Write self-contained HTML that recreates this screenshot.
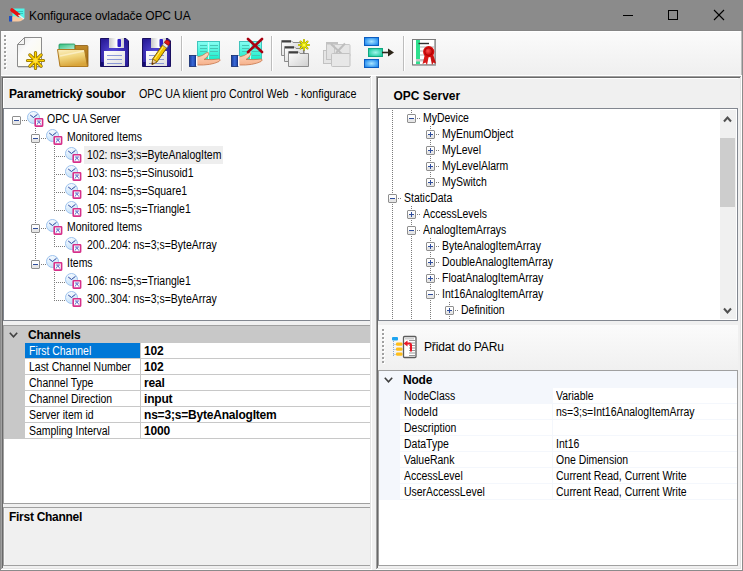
<!DOCTYPE html><html><head><meta charset="utf-8"><style>
html,body{margin:0;padding:0}
body{width:743px;height:571px;overflow:hidden;position:relative;background:#f0f0f0;font-family:"Liberation Sans",sans-serif}
body>div,body>svg{position:absolute}
.t{transform-origin:0 0}
.t{white-space:pre}
</style></head><body>
<div style="left:0px;top:0px;width:743px;height:31px;background:#8b8b8b"></div>
<div style="left:0px;top:30px;width:743px;height:1px;background:#858585"></div>
<div style="left:0px;top:31px;width:1px;height:540px;background:#8b8b8b"></div>
<div style="left:742px;top:31px;width:1px;height:540px;background:#8b8b8b"></div>
<div style="left:0px;top:570px;width:743px;height:1px;background:#8b8b8b"></div>
<div class="t" style="left:29px;top:8px;font-size:12px;line-height:16px;font-weight:normal;color:#000;letter-spacing:-0.12px;">Konfigurace ovladače OPC UA</div>
<svg style="left:0;top:0" width="743" height="31"><g stroke="#000" stroke-width="1" fill="none" shape-rendering="crispEdges"><line x1="623" y1="15.5" x2="633" y2="15.5"/><rect x="668.5" y="10.5" width="9" height="9"/></g><g stroke="#000" stroke-width="1.1" fill="none"><line x1="714" y1="10" x2="724" y2="20"/><line x1="724" y1="10" x2="714" y2="20"/></g></svg>
<div style="left:1px;top:31px;width:741px;height:44px;background:linear-gradient(#fbfbfb,#efefef)"></div>
<div style="left:1px;top:31px;width:741px;height:1px;background:#ffffff"></div>
<div style="left:1px;top:75px;width:741px;height:1px;background:#ffffff"></div>
<div style="left:741px;top:31px;width:1px;height:44px;background:#bcbcbc"></div>
<div style="left:5px;top:36px;width:2px;height:2px;background:#fff"></div>
<div style="left:4px;top:35px;width:2px;height:2px;background:#a0a0a0"></div>
<div style="left:5px;top:40px;width:2px;height:2px;background:#fff"></div>
<div style="left:4px;top:39px;width:2px;height:2px;background:#a0a0a0"></div>
<div style="left:5px;top:44px;width:2px;height:2px;background:#fff"></div>
<div style="left:4px;top:43px;width:2px;height:2px;background:#a0a0a0"></div>
<div style="left:5px;top:48px;width:2px;height:2px;background:#fff"></div>
<div style="left:4px;top:47px;width:2px;height:2px;background:#a0a0a0"></div>
<div style="left:5px;top:52px;width:2px;height:2px;background:#fff"></div>
<div style="left:4px;top:51px;width:2px;height:2px;background:#a0a0a0"></div>
<div style="left:5px;top:56px;width:2px;height:2px;background:#fff"></div>
<div style="left:4px;top:55px;width:2px;height:2px;background:#a0a0a0"></div>
<div style="left:5px;top:60px;width:2px;height:2px;background:#fff"></div>
<div style="left:4px;top:59px;width:2px;height:2px;background:#a0a0a0"></div>
<div style="left:5px;top:64px;width:2px;height:2px;background:#fff"></div>
<div style="left:4px;top:63px;width:2px;height:2px;background:#a0a0a0"></div>
<div style="left:5px;top:68px;width:2px;height:2px;background:#fff"></div>
<div style="left:4px;top:67px;width:2px;height:2px;background:#a0a0a0"></div>
<div style="left:181px;top:36px;width:1px;height:35px;background:#bdbdbd"></div>
<div style="left:182px;top:36px;width:1px;height:35px;background:#ffffff"></div>
<div style="left:271px;top:36px;width:1px;height:35px;background:#bdbdbd"></div>
<div style="left:272px;top:36px;width:1px;height:35px;background:#ffffff"></div>
<div style="left:403px;top:36px;width:1px;height:35px;background:#bdbdbd"></div>
<div style="left:404px;top:36px;width:1px;height:35px;background:#ffffff"></div>
<svg style="left:0;top:0" width="743" height="80">
<defs>
<linearGradient id="paperg" x1="0" y1="0" x2="1" y2="1"><stop offset="0" stop-color="#e4e4e4"/><stop offset="0.35" stop-color="#fbfbfb"/><stop offset="1" stop-color="#fdfbe6"/></linearGradient>
<linearGradient id="foldfront" x1="0" y1="0" x2="0.3" y2="1"><stop offset="0" stop-color="#fbefc4"/><stop offset="0.5" stop-color="#f1d67e"/><stop offset="1" stop-color="#d9a53a"/></linearGradient>
<linearGradient id="foldback" x1="0" y1="0" x2="0" y2="1"><stop offset="0" stop-color="#c08a2a"/><stop offset="1" stop-color="#9a6410"/></linearGradient>
<linearGradient id="tabg" x1="0" y1="0" x2="1" y2="1"><stop offset="0" stop-color="#2dbf7c"/><stop offset="1" stop-color="#b8ecd8"/></linearGradient>
<radialGradient id="flop" cx="0.45" cy="0.55" r="0.6"><stop offset="0" stop-color="#5b4fe0"/><stop offset="1" stop-color="#2a1d9a"/></radialGradient>
<linearGradient id="shut" x1="0" y1="0" x2="1" y2="0"><stop offset="0" stop-color="#c8c8c8"/><stop offset="0.5" stop-color="#ffffff"/><stop offset="1" stop-color="#d0d0d0"/></linearGradient>
<linearGradient id="labelg" x1="0" y1="0" x2="1" y2="1"><stop offset="0" stop-color="#ffffff"/><stop offset="1" stop-color="#dedede"/></linearGradient>
<linearGradient id="bookg" x1="0" y1="0" x2="0" y2="1"><stop offset="0" stop-color="#88fff4"/><stop offset="1" stop-color="#18ecc8"/></linearGradient>
<linearGradient id="skin" x1="0" y1="0" x2="0" y2="1"><stop offset="0" stop-color="#ffdcc4"/><stop offset="1" stop-color="#f6b08a"/></linearGradient>
<linearGradient id="sleeve" x1="0" y1="0" x2="1" y2="0"><stop offset="0" stop-color="#1a3c9c"/><stop offset="0.5" stop-color="#3a6ad8"/><stop offset="1" stop-color="#1a3c9c"/></linearGradient>
<linearGradient id="gfold" x1="0" y1="0" x2="1" y2="1"><stop offset="0" stop-color="#ffffff"/><stop offset="1" stop-color="#cfcfcf"/></linearGradient>
<radialGradient id="blueb" cx="0.5" cy="0.5" r="0.6"><stop offset="0" stop-color="#a8e4ff"/><stop offset="1" stop-color="#1a86ee"/></radialGradient>
<radialGradient id="tealb" cx="0.5" cy="0.5" r="0.6"><stop offset="0" stop-color="#a0f4ec"/><stop offset="1" stop-color="#18c89a"/></radialGradient>
<radialGradient id="seal" cx="0.4" cy="0.4" r="0.6"><stop offset="0" stop-color="#ff5050"/><stop offset="1" stop-color="#c00000"/></radialGradient>
</defs>

<g><path d="M24.5,37.5 H41.5 V66.5 H17.5 V44.5 Z" fill="url(#paperg)" stroke="#8c8c8c" stroke-width="1" stroke-linejoin="round"/><path d="M17.5,44.5 L24.5,37.5 V44.5 Z" fill="#f4f4f4" stroke="#8c8c8c" stroke-width="1" stroke-linejoin="round"/><rect x="18" y="67" width="24" height="1" fill="#d0d0d0"/></g>
<path d="M27.50,60.50 L43.50,60.50 M29.84,54.84 L41.16,66.16 M35.50,52.50 L35.50,68.50 M41.16,54.84 L29.84,66.16 " stroke="#8a6a00" stroke-width="3.2" stroke-linecap="round" fill="none"/><path d="M27.50,60.50 L43.50,60.50 M29.84,54.84 L41.16,66.16 M35.50,52.50 L35.50,68.50 M41.16,54.84 L29.84,66.16 " stroke="#ffd400" stroke-width="1.6" stroke-linecap="round" fill="none"/><circle cx="35.5" cy="60.5" r="2.2" fill="#ffe040"/>
<path d="M59,49.5 V45 Q59,44 60,44 H74 Q75,44 75,45 V49.5 Z" fill="url(#tabg)" stroke="#1f8f5c" stroke-width="0.8"/><path d="M75,45.5 H87 Q88,45.5 88,46.5 V66.5 H76 Z" fill="url(#foldback)" stroke="#8a5a10" stroke-width="0.8"/><path d="M57.5,49.5 H84.5 L87.5,66.5 H60 Z" fill="url(#foldfront)" stroke="#b07a20" stroke-width="1" stroke-linejoin="round"/><path d="M60,56 L84,51" stroke="#fff8e0" stroke-width="1.5" opacity="0.6"/>
<path d="M100.5,38.5 H126 L128.5,41 V66.5 H100.5 Z" fill="url(#flop)" stroke="#1a1060" stroke-width="1"/><rect x="109" y="38" width="15" height="10" fill="url(#shut)"/><rect x="117.5" y="39" width="3.5" height="8" rx="1" fill="#3020c8"/><rect x="104" y="51" width="21" height="15" fill="url(#labelg)"/><path d="M107,55.5 H122 M107,59.5 H122 M107,63.5 H122" stroke="#8a98d8" stroke-width="1"/><rect x="101" y="62" width="2.5" height="4" fill="#140c70"/>
<path d="M142.5,38.5 H168 L170.5,41 V66.5 H142.5 Z" fill="url(#flop)" stroke="#1a1060" stroke-width="1"/><rect x="151" y="38" width="15" height="10" fill="url(#shut)"/><rect x="159.5" y="39" width="3.5" height="8" rx="1" fill="#3020c8"/><rect x="146" y="51" width="21" height="15" fill="url(#labelg)"/><path d="M149,55.5 H164 M149,59.5 H164 M149,63.5 H164" stroke="#8a98d8" stroke-width="1"/><rect x="143" y="62" width="2.5" height="4" fill="#140c70"/>
<g transform="translate(152,64.5) rotate(-55)"><path d="M0,0 L5,-2.6 H22 V2.6 H5 Z" fill="#f4c400" stroke="#7a5a00" stroke-width="0.9"/><path d="M0,0 L5,-2.6 V2.6 Z" fill="#e8c8a0" stroke="#7a5a00" stroke-width="0.6"/><path d="M0,0 L2,-1 V1 Z" fill="#602000"/><rect x="22" y="-2.6" width="3" height="5.2" fill="#e8e8e8" stroke="#7a7a7a" stroke-width="0.5"/><path d="M25,-2.6 H27 Q29,-2.6 29,0 Q29,2.6 27,2.6 H25 Z" fill="#e01818" stroke="#900000" stroke-width="0.6"/><path d="M6,-1 H21" stroke="#fff080" stroke-width="0.9"/></g>
<rect x="197.5" y="41.5" width="22" height="18" fill="url(#bookg)" stroke="#40c4bc" stroke-width="1"/><path d="M208.5,42 V59" stroke="#c0fff8" stroke-width="1"/><path d="M200,45.5 H207 M200,48.5 H207 M200,51.5 H207 M210,45.5 H218 M210,48.5 H218 M210,51.5 H218 M210,55.5 H218" stroke="#48c4b4" stroke-width="1"/><path d="M197,57 Q203,56 206,53 Q209,51.5 209,54 Q207,58 204,59.5 Q212,60 219,59 Q221.5,59.5 219,61.5 Q211,65.5 197,65 Z" fill="url(#skin)" stroke="#c8784e" stroke-width="0.8"/><rect x="189.5" y="55.5" width="6.5" height="11" fill="url(#sleeve)" stroke="#10286c" stroke-width="0.8"/><rect x="196" y="56" width="1.5" height="10" fill="#ffffff"/>
<rect x="239.5" y="41.5" width="22" height="18" fill="url(#bookg)" stroke="#40c4bc" stroke-width="1"/><path d="M250.5,42 V59" stroke="#c0fff8" stroke-width="1"/><path d="M242,45.5 H249 M242,48.5 H249 M242,51.5 H249 M252,45.5 H260 M252,48.5 H260 M252,51.5 H260 M252,55.5 H260" stroke="#48c4b4" stroke-width="1"/><path d="M239,57 Q245,56 248,53 Q251,51.5 251,54 Q249,58 246,59.5 Q254,60 261,59 Q263.5,59.5 261,61.5 Q253,65.5 239,65 Z" fill="url(#skin)" stroke="#c8784e" stroke-width="0.8"/><rect x="231.5" y="55.5" width="6.5" height="11" fill="url(#sleeve)" stroke="#10286c" stroke-width="0.8"/><rect x="238" y="56" width="1.5" height="10" fill="#ffffff"/>
<path d="M248,39 L262,52 M262,39 L248,52" stroke="#a80010" stroke-width="2.6" stroke-linecap="round"/>
<path d="M281.5,40.5 H291 L293,42.5 V42.5 H300.5 V55.5 H281.5 Z" fill="url(#gfold)" stroke="#8c8c8c" stroke-width="1"/><rect x="282" y="40.5" width="9" height="2" fill="#404040"/>
<path d="M284.5,46.5 H294 L296,48.5 V48.5 H303.5 V61.5 H284.5 Z" fill="url(#gfold)" stroke="#8c8c8c" stroke-width="1"/><rect x="285" y="46.5" width="9" height="2" fill="#404040"/>
<path d="M288.5,51.5 H298 L300,53.5 V53.5 H308.5 V66.5 H288.5 Z" fill="url(#gfold)" stroke="#8c8c8c" stroke-width="1"/><rect x="289" y="51.5" width="9" height="2" fill="#404040"/>
<path d="M299,45 L309,45 M304,40 L304,50 M300.5,41.5 L307.5,48.5 M307.5,41.5 L300.5,48.5" stroke="#a8a800" stroke-width="2.1" stroke-linecap="round"/><path d="M299,45 L309,45 M304,40 L304,50 M300.5,41.5 L307.5,48.5 M307.5,41.5 L300.5,48.5" stroke="#f4f000" stroke-width="1" stroke-linecap="round"/><circle cx="304" cy="45" r="1.6" fill="#ffff40"/><path d="M304,50 V54" stroke="#707070" stroke-width="1"/>
<g opacity="0.9"><rect x="323.5" y="50.5" width="10" height="13" fill="#e4e4e4" stroke="#bdbdbd" stroke-width="1"/><rect x="326.5" y="42.5" width="11" height="17" fill="#e0e0e0" stroke="#bdbdbd" stroke-width="1"/><rect x="327" y="42.5" width="10" height="2" fill="#bdbdbd"/><rect x="334.5" y="44.5" width="15.5" height="12" rx="1" fill="#e4e4e4" stroke="#c4c4c4" stroke-width="1"/><path d="M331,44 L344,56 M345,43.5 L336,53" stroke="#b8b8b8" stroke-width="2"/><rect x="331.5" y="53.5" width="18.5" height="13" rx="1" fill="#e6e6e6" stroke="#bdbdbd" stroke-width="1"/></g>
<rect x="364.5" y="37.5" width="14" height="8" fill="url(#blueb)" stroke="#0c5cc0" stroke-width="1"/><rect x="368.5" y="48.5" width="14" height="8" fill="url(#tealb)" stroke="#10a880" stroke-width="1"/><rect x="364.5" y="59.5" width="14" height="8" fill="url(#blueb)" stroke="#0c5cc0" stroke-width="1"/><path d="M382,52.5 H389" stroke="#2c2418" stroke-width="1.6"/><path d="M388,48.5 L394,52.5 L388,56.5 Z" fill="#2c2418"/>
<rect x="412.5" y="39.5" width="23" height="25.5" fill="#ffffff" stroke="#7c7c7c" stroke-width="1"/><rect x="434" y="40" width="1.5" height="25" fill="#b0b0b0"/><rect x="413" y="64" width="22.5" height="1.5" fill="#a0a0a0"/><rect x="416" y="40" width="4" height="24" fill="#2ee08e"/><rect x="420" y="46" width="14" height="2" fill="#d8d8d8"/><rect x="420" y="50" width="8" height="2" fill="#d8d8d8"/><rect x="420" y="54" width="8" height="2" fill="#d8d8d8"/><rect x="416" y="59" width="10" height="2.5" fill="#c8c8c8"/><path d="M418.5,43.5 H429" stroke="#303030" stroke-width="1.4"/><path d="M425,54 L422.5,64 L425.5,62.5 L427,65 L429,55 Z" fill="#d81818"/><path d="M430,55 L432,65 L433.5,62.5 L436,63.5 L433,54 Z" fill="#c81010"/><circle cx="428.7" cy="51.7" r="5.6" fill="#d80c0c"/><circle cx="428.7" cy="51.7" r="3.8" fill="url(#seal)" stroke="#a00000" stroke-width="0.6"/>
</svg>
<svg style="left:0;top:0" width="30" height="30"><rect x="12.5" y="8.5" width="12" height="9.5" fill="#50f4e8"/><path d="M16,11.5 H23 M16,13.5 H23" stroke="#30b8b0" stroke-width="0.8"/><path d="M12,16.5 Q16,15.5 18,17.5 Q22,18 23.5,18.5 Q23,21 18,21.5 H12 Z" fill="#f8c8a0"/><rect x="9" y="16" width="3.2" height="5.5" fill="#2050c0"/><path d="M12,10 L18.5,15" stroke="#e81010" stroke-width="3.6" stroke-linecap="round"/><path d="M18.5,15 L24,19" stroke="#f0f0f0" stroke-width="1.4"/></svg>
<div style="left:1px;top:76px;width:371px;height:1px;background:#a0a0a0"></div>
<div style="left:1px;top:76px;width:1px;height:494px;background:#a0a0a0"></div>
<div style="left:2px;top:77px;width:369px;height:1px;background:#696969"></div>
<div style="left:2px;top:77px;width:1px;height:492px;background:#696969"></div>
<div style="left:1px;top:569px;width:371px;height:1px;background:#ffffff"></div>
<div style="left:371px;top:76px;width:1px;height:494px;background:#ffffff"></div>
<div style="left:2px;top:568px;width:369px;height:1px;background:#e3e3e3"></div>
<div style="left:370px;top:77px;width:1px;height:492px;background:#e3e3e3"></div>
<div style="left:376px;top:76px;width:366px;height:1px;background:#a0a0a0"></div>
<div style="left:376px;top:76px;width:1px;height:494px;background:#a0a0a0"></div>
<div style="left:377px;top:77px;width:364px;height:1px;background:#696969"></div>
<div style="left:377px;top:77px;width:1px;height:492px;background:#696969"></div>
<div style="left:376px;top:569px;width:366px;height:1px;background:#ffffff"></div>
<div style="left:741px;top:76px;width:1px;height:494px;background:#ffffff"></div>
<div style="left:377px;top:568px;width:364px;height:1px;background:#e3e3e3"></div>
<div style="left:740px;top:77px;width:1px;height:492px;background:#e3e3e3"></div>
<div style="left:3px;top:78px;width:367px;height:1px;background:#fff"></div>
<div style="left:3px;top:78px;width:1px;height:30px;background:#fff"></div>
<div class="t" style="left:9px;top:86px;font-size:12px;line-height:16px;font-weight:bold;color:#000;letter-spacing:-0.15px;">Parametrický soubor</div>
<div class="t" style="left:139px;top:86px;font-size:12px;line-height:16px;font-weight:normal;color:#000;letter-spacing:0px;transform:scaleX(0.894);">OPC UA klient pro Control Web  - konfigurace</div>
<div style="left:378px;top:78px;width:360px;height:1px;background:#fff"></div>
<div style="left:378px;top:78px;width:1px;height:30px;background:#fff"></div>
<div class="t" style="left:393.5px;top:88px;font-size:12px;line-height:16px;font-weight:bold;color:#000;letter-spacing:0px;">OPC Server</div>
<div style="left:3px;top:108px;width:367px;height:213px;background:#fff;border:1px solid #828790;border-right:none;box-sizing:border-box"></div>
<div style="left:378px;top:108px;width:360px;height:213px;background:#fff;border:1px solid #828790;box-sizing:border-box"></div>
<svg style="left:0px;top:0px" width="372" height="322" shape-rendering="crispEdges"><defs><linearGradient id="cg" x1="0" y1="0" x2="0.3" y2="1"><stop offset="0" stop-color="#ffffff"/><stop offset="1" stop-color="#c6e2fa"/></linearGradient></defs><rect x="35" y="128" width="1" height="1" fill="#7c7c7c"/><rect x="35" y="130" width="1" height="1" fill="#7c7c7c"/><rect x="35" y="132" width="1" height="1" fill="#7c7c7c"/><rect x="35" y="134" width="1" height="1" fill="#7c7c7c"/><rect x="35" y="136" width="1" height="1" fill="#7c7c7c"/><rect x="35" y="138" width="1" height="1" fill="#7c7c7c"/><rect x="35" y="140" width="1" height="1" fill="#7c7c7c"/><rect x="35" y="142" width="1" height="1" fill="#7c7c7c"/><rect x="35" y="144" width="1" height="1" fill="#7c7c7c"/><rect x="35" y="146" width="1" height="1" fill="#7c7c7c"/><rect x="35" y="148" width="1" height="1" fill="#7c7c7c"/><rect x="35" y="150" width="1" height="1" fill="#7c7c7c"/><rect x="35" y="152" width="1" height="1" fill="#7c7c7c"/><rect x="35" y="154" width="1" height="1" fill="#7c7c7c"/><rect x="35" y="156" width="1" height="1" fill="#7c7c7c"/><rect x="35" y="158" width="1" height="1" fill="#7c7c7c"/><rect x="35" y="160" width="1" height="1" fill="#7c7c7c"/><rect x="35" y="162" width="1" height="1" fill="#7c7c7c"/><rect x="35" y="164" width="1" height="1" fill="#7c7c7c"/><rect x="35" y="166" width="1" height="1" fill="#7c7c7c"/><rect x="35" y="168" width="1" height="1" fill="#7c7c7c"/><rect x="35" y="170" width="1" height="1" fill="#7c7c7c"/><rect x="35" y="172" width="1" height="1" fill="#7c7c7c"/><rect x="35" y="174" width="1" height="1" fill="#7c7c7c"/><rect x="35" y="176" width="1" height="1" fill="#7c7c7c"/><rect x="35" y="178" width="1" height="1" fill="#7c7c7c"/><rect x="35" y="180" width="1" height="1" fill="#7c7c7c"/><rect x="35" y="182" width="1" height="1" fill="#7c7c7c"/><rect x="35" y="184" width="1" height="1" fill="#7c7c7c"/><rect x="35" y="186" width="1" height="1" fill="#7c7c7c"/><rect x="35" y="188" width="1" height="1" fill="#7c7c7c"/><rect x="35" y="190" width="1" height="1" fill="#7c7c7c"/><rect x="35" y="192" width="1" height="1" fill="#7c7c7c"/><rect x="35" y="194" width="1" height="1" fill="#7c7c7c"/><rect x="35" y="196" width="1" height="1" fill="#7c7c7c"/><rect x="35" y="198" width="1" height="1" fill="#7c7c7c"/><rect x="35" y="200" width="1" height="1" fill="#7c7c7c"/><rect x="35" y="202" width="1" height="1" fill="#7c7c7c"/><rect x="35" y="204" width="1" height="1" fill="#7c7c7c"/><rect x="35" y="206" width="1" height="1" fill="#7c7c7c"/><rect x="35" y="208" width="1" height="1" fill="#7c7c7c"/><rect x="35" y="210" width="1" height="1" fill="#7c7c7c"/><rect x="35" y="212" width="1" height="1" fill="#7c7c7c"/><rect x="35" y="214" width="1" height="1" fill="#7c7c7c"/><rect x="35" y="216" width="1" height="1" fill="#7c7c7c"/><rect x="35" y="218" width="1" height="1" fill="#7c7c7c"/><rect x="35" y="220" width="1" height="1" fill="#7c7c7c"/><rect x="35" y="222" width="1" height="1" fill="#7c7c7c"/><rect x="35" y="224" width="1" height="1" fill="#7c7c7c"/><rect x="35" y="226" width="1" height="1" fill="#7c7c7c"/><rect x="35" y="228" width="1" height="1" fill="#7c7c7c"/><rect x="35" y="230" width="1" height="1" fill="#7c7c7c"/><rect x="35" y="232" width="1" height="1" fill="#7c7c7c"/><rect x="35" y="234" width="1" height="1" fill="#7c7c7c"/><rect x="35" y="236" width="1" height="1" fill="#7c7c7c"/><rect x="35" y="238" width="1" height="1" fill="#7c7c7c"/><rect x="35" y="240" width="1" height="1" fill="#7c7c7c"/><rect x="35" y="242" width="1" height="1" fill="#7c7c7c"/><rect x="35" y="244" width="1" height="1" fill="#7c7c7c"/><rect x="35" y="246" width="1" height="1" fill="#7c7c7c"/><rect x="35" y="248" width="1" height="1" fill="#7c7c7c"/><rect x="35" y="250" width="1" height="1" fill="#7c7c7c"/><rect x="35" y="252" width="1" height="1" fill="#7c7c7c"/><rect x="35" y="254" width="1" height="1" fill="#7c7c7c"/><rect x="35" y="256" width="1" height="1" fill="#7c7c7c"/><rect x="35" y="258" width="1" height="1" fill="#7c7c7c"/><rect x="35" y="260" width="1" height="1" fill="#7c7c7c"/><rect x="35" y="262" width="1" height="1" fill="#7c7c7c"/><rect x="35" y="264" width="1" height="1" fill="#7c7c7c"/><rect x="54" y="146" width="1" height="1" fill="#7c7c7c"/><rect x="54" y="148" width="1" height="1" fill="#7c7c7c"/><rect x="54" y="150" width="1" height="1" fill="#7c7c7c"/><rect x="54" y="152" width="1" height="1" fill="#7c7c7c"/><rect x="54" y="154" width="1" height="1" fill="#7c7c7c"/><rect x="54" y="156" width="1" height="1" fill="#7c7c7c"/><rect x="54" y="158" width="1" height="1" fill="#7c7c7c"/><rect x="54" y="160" width="1" height="1" fill="#7c7c7c"/><rect x="54" y="162" width="1" height="1" fill="#7c7c7c"/><rect x="54" y="164" width="1" height="1" fill="#7c7c7c"/><rect x="54" y="166" width="1" height="1" fill="#7c7c7c"/><rect x="54" y="168" width="1" height="1" fill="#7c7c7c"/><rect x="54" y="170" width="1" height="1" fill="#7c7c7c"/><rect x="54" y="172" width="1" height="1" fill="#7c7c7c"/><rect x="54" y="174" width="1" height="1" fill="#7c7c7c"/><rect x="54" y="176" width="1" height="1" fill="#7c7c7c"/><rect x="54" y="178" width="1" height="1" fill="#7c7c7c"/><rect x="54" y="180" width="1" height="1" fill="#7c7c7c"/><rect x="54" y="182" width="1" height="1" fill="#7c7c7c"/><rect x="54" y="184" width="1" height="1" fill="#7c7c7c"/><rect x="54" y="186" width="1" height="1" fill="#7c7c7c"/><rect x="54" y="188" width="1" height="1" fill="#7c7c7c"/><rect x="54" y="190" width="1" height="1" fill="#7c7c7c"/><rect x="54" y="192" width="1" height="1" fill="#7c7c7c"/><rect x="54" y="194" width="1" height="1" fill="#7c7c7c"/><rect x="54" y="196" width="1" height="1" fill="#7c7c7c"/><rect x="54" y="198" width="1" height="1" fill="#7c7c7c"/><rect x="54" y="200" width="1" height="1" fill="#7c7c7c"/><rect x="54" y="202" width="1" height="1" fill="#7c7c7c"/><rect x="54" y="204" width="1" height="1" fill="#7c7c7c"/><rect x="54" y="206" width="1" height="1" fill="#7c7c7c"/><rect x="54" y="208" width="1" height="1" fill="#7c7c7c"/><rect x="54" y="210" width="1" height="1" fill="#7c7c7c"/><rect x="54" y="236" width="1" height="1" fill="#7c7c7c"/><rect x="54" y="238" width="1" height="1" fill="#7c7c7c"/><rect x="54" y="240" width="1" height="1" fill="#7c7c7c"/><rect x="54" y="242" width="1" height="1" fill="#7c7c7c"/><rect x="54" y="244" width="1" height="1" fill="#7c7c7c"/><rect x="54" y="246" width="1" height="1" fill="#7c7c7c"/><rect x="54" y="272" width="1" height="1" fill="#7c7c7c"/><rect x="54" y="274" width="1" height="1" fill="#7c7c7c"/><rect x="54" y="276" width="1" height="1" fill="#7c7c7c"/><rect x="54" y="278" width="1" height="1" fill="#7c7c7c"/><rect x="54" y="280" width="1" height="1" fill="#7c7c7c"/><rect x="54" y="282" width="1" height="1" fill="#7c7c7c"/><rect x="54" y="284" width="1" height="1" fill="#7c7c7c"/><rect x="54" y="286" width="1" height="1" fill="#7c7c7c"/><rect x="54" y="288" width="1" height="1" fill="#7c7c7c"/><rect x="54" y="290" width="1" height="1" fill="#7c7c7c"/><rect x="54" y="292" width="1" height="1" fill="#7c7c7c"/><rect x="54" y="294" width="1" height="1" fill="#7c7c7c"/><rect x="54" y="296" width="1" height="1" fill="#7c7c7c"/><rect x="54" y="298" width="1" height="1" fill="#7c7c7c"/><rect x="54" y="300" width="1" height="1" fill="#7c7c7c"/><rect x="84" y="146" width="139" height="18" fill="#eeeeee"/><rect x="22" y="120" width="1" height="1" fill="#7c7c7c"/><rect x="24" y="120" width="1" height="1" fill="#7c7c7c"/><rect x="26" y="120" width="1" height="1" fill="#7c7c7c"/><rect x="13" y="117" width="7" height="4" fill="#fdfdfd"/><rect x="13" y="121" width="7" height="3" fill="#e6e6e6"/><rect x="13" y="116" width="7" height="1" fill="#8f8f8f"/><rect x="13" y="124" width="7" height="1" fill="#8f8f8f"/><rect x="12" y="117" width="1" height="7" fill="#8f8f8f"/><rect x="20" y="117" width="1" height="7" fill="#8f8f8f"/><rect x="12" y="116" width="1" height="1" fill="#cdcdcd"/><rect x="20" y="116" width="1" height="1" fill="#cdcdcd"/><rect x="12" y="124" width="1" height="1" fill="#cdcdcd"/><rect x="20" y="124" width="1" height="1" fill="#cdcdcd"/><rect x="14" y="120" width="5" height="1" fill="#2f4d9c"/><g shape-rendering="auto"><circle cx="33.5" cy="117.5" r="6" fill="url(#cg)" stroke="#9cc2ee" stroke-width="1"/><polyline points="30.2,115 33.5,117.5 37.5,114.3" fill="none" stroke="#28449c" stroke-width="1"/><rect x="35.2" y="118.7" width="7.4" height="7.4" rx="0.5" fill="#fff" stroke="#d6308a" stroke-width="1.6"/><path d="M37,124.6 L38.9,121.5 L40.8,124.6 M36.8,121 H41" fill="none" stroke="#3040b8" stroke-width="0.75"/></g><rect x="41" y="138" width="1" height="1" fill="#7c7c7c"/><rect x="43" y="138" width="1" height="1" fill="#7c7c7c"/><rect x="45" y="138" width="1" height="1" fill="#7c7c7c"/><rect x="32" y="135" width="7" height="4" fill="#fdfdfd"/><rect x="32" y="139" width="7" height="3" fill="#e6e6e6"/><rect x="32" y="134" width="7" height="1" fill="#8f8f8f"/><rect x="32" y="142" width="7" height="1" fill="#8f8f8f"/><rect x="31" y="135" width="1" height="7" fill="#8f8f8f"/><rect x="39" y="135" width="1" height="7" fill="#8f8f8f"/><rect x="31" y="134" width="1" height="1" fill="#cdcdcd"/><rect x="39" y="134" width="1" height="1" fill="#cdcdcd"/><rect x="31" y="142" width="1" height="1" fill="#cdcdcd"/><rect x="39" y="142" width="1" height="1" fill="#cdcdcd"/><rect x="33" y="138" width="5" height="1" fill="#2f4d9c"/><g shape-rendering="auto"><circle cx="52.5" cy="135.5" r="6" fill="url(#cg)" stroke="#9cc2ee" stroke-width="1"/><polyline points="49.2,133 52.5,135.5 56.5,132.3" fill="none" stroke="#28449c" stroke-width="1"/><rect x="54.2" y="136.7" width="7.4" height="7.4" rx="0.5" fill="#fff" stroke="#d6308a" stroke-width="1.6"/><path d="M56,142.6 L57.9,139.5 L59.8,142.6 M55.8,139 H60" fill="none" stroke="#3040b8" stroke-width="0.75"/></g><rect x="54" y="156" width="1" height="1" fill="#7c7c7c"/><rect x="56" y="156" width="1" height="1" fill="#7c7c7c"/><rect x="58" y="156" width="1" height="1" fill="#7c7c7c"/><rect x="60" y="156" width="1" height="1" fill="#7c7c7c"/><rect x="62" y="156" width="1" height="1" fill="#7c7c7c"/><rect x="64" y="156" width="1" height="1" fill="#7c7c7c"/><g shape-rendering="auto"><circle cx="71.5" cy="153.5" r="6" fill="url(#cg)" stroke="#9cc2ee" stroke-width="1"/><polyline points="68.2,151 71.5,153.5 75.5,150.3" fill="none" stroke="#28449c" stroke-width="1"/><rect x="73.2" y="154.7" width="7.4" height="7.4" rx="0.5" fill="#fff" stroke="#d6308a" stroke-width="1.6"/><path d="M75,160.6 L76.9,157.5 L78.8,160.6 M74.8,157 H79" fill="none" stroke="#3040b8" stroke-width="0.75"/></g><rect x="54" y="174" width="1" height="1" fill="#7c7c7c"/><rect x="56" y="174" width="1" height="1" fill="#7c7c7c"/><rect x="58" y="174" width="1" height="1" fill="#7c7c7c"/><rect x="60" y="174" width="1" height="1" fill="#7c7c7c"/><rect x="62" y="174" width="1" height="1" fill="#7c7c7c"/><rect x="64" y="174" width="1" height="1" fill="#7c7c7c"/><g shape-rendering="auto"><circle cx="71.5" cy="171.5" r="6" fill="url(#cg)" stroke="#9cc2ee" stroke-width="1"/><polyline points="68.2,169 71.5,171.5 75.5,168.3" fill="none" stroke="#28449c" stroke-width="1"/><rect x="73.2" y="172.7" width="7.4" height="7.4" rx="0.5" fill="#fff" stroke="#d6308a" stroke-width="1.6"/><path d="M75,178.6 L76.9,175.5 L78.8,178.6 M74.8,175 H79" fill="none" stroke="#3040b8" stroke-width="0.75"/></g><rect x="54" y="192" width="1" height="1" fill="#7c7c7c"/><rect x="56" y="192" width="1" height="1" fill="#7c7c7c"/><rect x="58" y="192" width="1" height="1" fill="#7c7c7c"/><rect x="60" y="192" width="1" height="1" fill="#7c7c7c"/><rect x="62" y="192" width="1" height="1" fill="#7c7c7c"/><rect x="64" y="192" width="1" height="1" fill="#7c7c7c"/><g shape-rendering="auto"><circle cx="71.5" cy="189.5" r="6" fill="url(#cg)" stroke="#9cc2ee" stroke-width="1"/><polyline points="68.2,187 71.5,189.5 75.5,186.3" fill="none" stroke="#28449c" stroke-width="1"/><rect x="73.2" y="190.7" width="7.4" height="7.4" rx="0.5" fill="#fff" stroke="#d6308a" stroke-width="1.6"/><path d="M75,196.6 L76.9,193.5 L78.8,196.6 M74.8,193 H79" fill="none" stroke="#3040b8" stroke-width="0.75"/></g><rect x="54" y="210" width="1" height="1" fill="#7c7c7c"/><rect x="56" y="210" width="1" height="1" fill="#7c7c7c"/><rect x="58" y="210" width="1" height="1" fill="#7c7c7c"/><rect x="60" y="210" width="1" height="1" fill="#7c7c7c"/><rect x="62" y="210" width="1" height="1" fill="#7c7c7c"/><rect x="64" y="210" width="1" height="1" fill="#7c7c7c"/><g shape-rendering="auto"><circle cx="71.5" cy="207.5" r="6" fill="url(#cg)" stroke="#9cc2ee" stroke-width="1"/><polyline points="68.2,205 71.5,207.5 75.5,204.3" fill="none" stroke="#28449c" stroke-width="1"/><rect x="73.2" y="208.7" width="7.4" height="7.4" rx="0.5" fill="#fff" stroke="#d6308a" stroke-width="1.6"/><path d="M75,214.6 L76.9,211.5 L78.8,214.6 M74.8,211 H79" fill="none" stroke="#3040b8" stroke-width="0.75"/></g><rect x="41" y="228" width="1" height="1" fill="#7c7c7c"/><rect x="43" y="228" width="1" height="1" fill="#7c7c7c"/><rect x="45" y="228" width="1" height="1" fill="#7c7c7c"/><rect x="32" y="225" width="7" height="4" fill="#fdfdfd"/><rect x="32" y="229" width="7" height="3" fill="#e6e6e6"/><rect x="32" y="224" width="7" height="1" fill="#8f8f8f"/><rect x="32" y="232" width="7" height="1" fill="#8f8f8f"/><rect x="31" y="225" width="1" height="7" fill="#8f8f8f"/><rect x="39" y="225" width="1" height="7" fill="#8f8f8f"/><rect x="31" y="224" width="1" height="1" fill="#cdcdcd"/><rect x="39" y="224" width="1" height="1" fill="#cdcdcd"/><rect x="31" y="232" width="1" height="1" fill="#cdcdcd"/><rect x="39" y="232" width="1" height="1" fill="#cdcdcd"/><rect x="33" y="228" width="5" height="1" fill="#2f4d9c"/><g shape-rendering="auto"><circle cx="52.5" cy="225.5" r="6" fill="url(#cg)" stroke="#9cc2ee" stroke-width="1"/><polyline points="49.2,223 52.5,225.5 56.5,222.3" fill="none" stroke="#28449c" stroke-width="1"/><rect x="54.2" y="226.7" width="7.4" height="7.4" rx="0.5" fill="#fff" stroke="#d6308a" stroke-width="1.6"/><path d="M56,232.6 L57.9,229.5 L59.8,232.6 M55.8,229 H60" fill="none" stroke="#3040b8" stroke-width="0.75"/></g><rect x="54" y="246" width="1" height="1" fill="#7c7c7c"/><rect x="56" y="246" width="1" height="1" fill="#7c7c7c"/><rect x="58" y="246" width="1" height="1" fill="#7c7c7c"/><rect x="60" y="246" width="1" height="1" fill="#7c7c7c"/><rect x="62" y="246" width="1" height="1" fill="#7c7c7c"/><rect x="64" y="246" width="1" height="1" fill="#7c7c7c"/><g shape-rendering="auto"><circle cx="71.5" cy="243.5" r="6" fill="url(#cg)" stroke="#9cc2ee" stroke-width="1"/><polyline points="68.2,241 71.5,243.5 75.5,240.3" fill="none" stroke="#28449c" stroke-width="1"/><rect x="73.2" y="244.7" width="7.4" height="7.4" rx="0.5" fill="#fff" stroke="#d6308a" stroke-width="1.6"/><path d="M75,250.6 L76.9,247.5 L78.8,250.6 M74.8,247 H79" fill="none" stroke="#3040b8" stroke-width="0.75"/></g><rect x="41" y="264" width="1" height="1" fill="#7c7c7c"/><rect x="43" y="264" width="1" height="1" fill="#7c7c7c"/><rect x="45" y="264" width="1" height="1" fill="#7c7c7c"/><rect x="32" y="261" width="7" height="4" fill="#fdfdfd"/><rect x="32" y="265" width="7" height="3" fill="#e6e6e6"/><rect x="32" y="260" width="7" height="1" fill="#8f8f8f"/><rect x="32" y="268" width="7" height="1" fill="#8f8f8f"/><rect x="31" y="261" width="1" height="7" fill="#8f8f8f"/><rect x="39" y="261" width="1" height="7" fill="#8f8f8f"/><rect x="31" y="260" width="1" height="1" fill="#cdcdcd"/><rect x="39" y="260" width="1" height="1" fill="#cdcdcd"/><rect x="31" y="268" width="1" height="1" fill="#cdcdcd"/><rect x="39" y="268" width="1" height="1" fill="#cdcdcd"/><rect x="33" y="264" width="5" height="1" fill="#2f4d9c"/><g shape-rendering="auto"><circle cx="52.5" cy="261.5" r="6" fill="url(#cg)" stroke="#9cc2ee" stroke-width="1"/><polyline points="49.2,259 52.5,261.5 56.5,258.3" fill="none" stroke="#28449c" stroke-width="1"/><rect x="54.2" y="262.7" width="7.4" height="7.4" rx="0.5" fill="#fff" stroke="#d6308a" stroke-width="1.6"/><path d="M56,268.6 L57.9,265.5 L59.8,268.6 M55.8,265 H60" fill="none" stroke="#3040b8" stroke-width="0.75"/></g><rect x="54" y="282" width="1" height="1" fill="#7c7c7c"/><rect x="56" y="282" width="1" height="1" fill="#7c7c7c"/><rect x="58" y="282" width="1" height="1" fill="#7c7c7c"/><rect x="60" y="282" width="1" height="1" fill="#7c7c7c"/><rect x="62" y="282" width="1" height="1" fill="#7c7c7c"/><rect x="64" y="282" width="1" height="1" fill="#7c7c7c"/><g shape-rendering="auto"><circle cx="71.5" cy="279.5" r="6" fill="url(#cg)" stroke="#9cc2ee" stroke-width="1"/><polyline points="68.2,277 71.5,279.5 75.5,276.3" fill="none" stroke="#28449c" stroke-width="1"/><rect x="73.2" y="280.7" width="7.4" height="7.4" rx="0.5" fill="#fff" stroke="#d6308a" stroke-width="1.6"/><path d="M75,286.6 L76.9,283.5 L78.8,286.6 M74.8,283 H79" fill="none" stroke="#3040b8" stroke-width="0.75"/></g><rect x="54" y="300" width="1" height="1" fill="#7c7c7c"/><rect x="56" y="300" width="1" height="1" fill="#7c7c7c"/><rect x="58" y="300" width="1" height="1" fill="#7c7c7c"/><rect x="60" y="300" width="1" height="1" fill="#7c7c7c"/><rect x="62" y="300" width="1" height="1" fill="#7c7c7c"/><rect x="64" y="300" width="1" height="1" fill="#7c7c7c"/><g shape-rendering="auto"><circle cx="71.5" cy="297.5" r="6" fill="url(#cg)" stroke="#9cc2ee" stroke-width="1"/><polyline points="68.2,295 71.5,297.5 75.5,294.3" fill="none" stroke="#28449c" stroke-width="1"/><rect x="73.2" y="298.7" width="7.4" height="7.4" rx="0.5" fill="#fff" stroke="#d6308a" stroke-width="1.6"/><path d="M75,304.6 L76.9,301.5 L78.8,304.6 M74.8,301 H79" fill="none" stroke="#3040b8" stroke-width="0.75"/></g></svg>
<div class="t" style="left:47px;top:111px;font-size:12px;line-height:16px;font-weight:normal;color:#000;letter-spacing:0px;transform:scaleX(0.872);">OPC UA Server</div>
<div class="t" style="left:66.8px;top:129px;font-size:12px;line-height:16px;font-weight:normal;color:#000;letter-spacing:0px;transform:scaleX(0.872);">Monitored Items</div>
<div class="t" style="left:86.5px;top:147px;font-size:12px;line-height:16px;font-weight:normal;color:#000;letter-spacing:0px;transform:scaleX(0.872);">102: ns=3;s=ByteAnalogItem</div>
<div class="t" style="left:86.5px;top:165px;font-size:12px;line-height:16px;font-weight:normal;color:#000;letter-spacing:0px;transform:scaleX(0.872);">103: ns=5;s=Sinusoid1</div>
<div class="t" style="left:86.5px;top:183px;font-size:12px;line-height:16px;font-weight:normal;color:#000;letter-spacing:0px;transform:scaleX(0.872);">104: ns=5;s=Square1</div>
<div class="t" style="left:86.5px;top:201px;font-size:12px;line-height:16px;font-weight:normal;color:#000;letter-spacing:0px;transform:scaleX(0.872);">105: ns=5;s=Triangle1</div>
<div class="t" style="left:66.8px;top:219px;font-size:12px;line-height:16px;font-weight:normal;color:#000;letter-spacing:0px;transform:scaleX(0.872);">Monitored Items</div>
<div class="t" style="left:86.5px;top:237px;font-size:12px;line-height:16px;font-weight:normal;color:#000;letter-spacing:0px;transform:scaleX(0.872);">200..204: ns=3;s=ByteArray</div>
<div class="t" style="left:66.8px;top:255px;font-size:12px;line-height:16px;font-weight:normal;color:#000;letter-spacing:0px;transform:scaleX(0.872);">Items</div>
<div class="t" style="left:86.5px;top:273px;font-size:12px;line-height:16px;font-weight:normal;color:#000;letter-spacing:0px;transform:scaleX(0.872);">106: ns=5;s=Triangle1</div>
<div class="t" style="left:86.5px;top:291px;font-size:12px;line-height:16px;font-weight:normal;color:#000;letter-spacing:0px;transform:scaleX(0.872);">300..304: ns=3;s=ByteArray</div>
<svg style="left:379px;top:109px" width="340" height="211" shape-rendering="crispEdges"><rect x="13" y="1" width="1" height="1" fill="#7c7c7c"/><rect x="13" y="3" width="1" height="1" fill="#7c7c7c"/><rect x="13" y="5" width="1" height="1" fill="#7c7c7c"/><rect x="13" y="7" width="1" height="1" fill="#7c7c7c"/><rect x="13" y="9" width="1" height="1" fill="#7c7c7c"/><rect x="13" y="11" width="1" height="1" fill="#7c7c7c"/><rect x="13" y="13" width="1" height="1" fill="#7c7c7c"/><rect x="13" y="15" width="1" height="1" fill="#7c7c7c"/><rect x="13" y="17" width="1" height="1" fill="#7c7c7c"/><rect x="13" y="19" width="1" height="1" fill="#7c7c7c"/><rect x="13" y="21" width="1" height="1" fill="#7c7c7c"/><rect x="13" y="23" width="1" height="1" fill="#7c7c7c"/><rect x="13" y="25" width="1" height="1" fill="#7c7c7c"/><rect x="13" y="27" width="1" height="1" fill="#7c7c7c"/><rect x="13" y="29" width="1" height="1" fill="#7c7c7c"/><rect x="13" y="31" width="1" height="1" fill="#7c7c7c"/><rect x="13" y="33" width="1" height="1" fill="#7c7c7c"/><rect x="13" y="35" width="1" height="1" fill="#7c7c7c"/><rect x="13" y="37" width="1" height="1" fill="#7c7c7c"/><rect x="13" y="39" width="1" height="1" fill="#7c7c7c"/><rect x="13" y="41" width="1" height="1" fill="#7c7c7c"/><rect x="13" y="43" width="1" height="1" fill="#7c7c7c"/><rect x="13" y="45" width="1" height="1" fill="#7c7c7c"/><rect x="13" y="47" width="1" height="1" fill="#7c7c7c"/><rect x="13" y="49" width="1" height="1" fill="#7c7c7c"/><rect x="13" y="51" width="1" height="1" fill="#7c7c7c"/><rect x="13" y="53" width="1" height="1" fill="#7c7c7c"/><rect x="13" y="55" width="1" height="1" fill="#7c7c7c"/><rect x="13" y="57" width="1" height="1" fill="#7c7c7c"/><rect x="13" y="59" width="1" height="1" fill="#7c7c7c"/><rect x="13" y="61" width="1" height="1" fill="#7c7c7c"/><rect x="13" y="63" width="1" height="1" fill="#7c7c7c"/><rect x="13" y="65" width="1" height="1" fill="#7c7c7c"/><rect x="13" y="67" width="1" height="1" fill="#7c7c7c"/><rect x="13" y="69" width="1" height="1" fill="#7c7c7c"/><rect x="13" y="71" width="1" height="1" fill="#7c7c7c"/><rect x="13" y="73" width="1" height="1" fill="#7c7c7c"/><rect x="13" y="75" width="1" height="1" fill="#7c7c7c"/><rect x="13" y="77" width="1" height="1" fill="#7c7c7c"/><rect x="13" y="79" width="1" height="1" fill="#7c7c7c"/><rect x="13" y="81" width="1" height="1" fill="#7c7c7c"/><rect x="13" y="83" width="1" height="1" fill="#7c7c7c"/><rect x="13" y="85" width="1" height="1" fill="#7c7c7c"/><rect x="13" y="87" width="1" height="1" fill="#7c7c7c"/><rect x="13" y="89" width="1" height="1" fill="#7c7c7c"/><rect x="13" y="91" width="1" height="1" fill="#7c7c7c"/><rect x="13" y="93" width="1" height="1" fill="#7c7c7c"/><rect x="13" y="95" width="1" height="1" fill="#7c7c7c"/><rect x="13" y="97" width="1" height="1" fill="#7c7c7c"/><rect x="13" y="99" width="1" height="1" fill="#7c7c7c"/><rect x="13" y="101" width="1" height="1" fill="#7c7c7c"/><rect x="13" y="103" width="1" height="1" fill="#7c7c7c"/><rect x="13" y="105" width="1" height="1" fill="#7c7c7c"/><rect x="13" y="107" width="1" height="1" fill="#7c7c7c"/><rect x="13" y="109" width="1" height="1" fill="#7c7c7c"/><rect x="13" y="111" width="1" height="1" fill="#7c7c7c"/><rect x="13" y="113" width="1" height="1" fill="#7c7c7c"/><rect x="13" y="115" width="1" height="1" fill="#7c7c7c"/><rect x="13" y="117" width="1" height="1" fill="#7c7c7c"/><rect x="13" y="119" width="1" height="1" fill="#7c7c7c"/><rect x="13" y="121" width="1" height="1" fill="#7c7c7c"/><rect x="13" y="123" width="1" height="1" fill="#7c7c7c"/><rect x="13" y="125" width="1" height="1" fill="#7c7c7c"/><rect x="13" y="127" width="1" height="1" fill="#7c7c7c"/><rect x="13" y="129" width="1" height="1" fill="#7c7c7c"/><rect x="13" y="131" width="1" height="1" fill="#7c7c7c"/><rect x="13" y="133" width="1" height="1" fill="#7c7c7c"/><rect x="13" y="135" width="1" height="1" fill="#7c7c7c"/><rect x="13" y="137" width="1" height="1" fill="#7c7c7c"/><rect x="13" y="139" width="1" height="1" fill="#7c7c7c"/><rect x="13" y="141" width="1" height="1" fill="#7c7c7c"/><rect x="13" y="143" width="1" height="1" fill="#7c7c7c"/><rect x="13" y="145" width="1" height="1" fill="#7c7c7c"/><rect x="13" y="147" width="1" height="1" fill="#7c7c7c"/><rect x="13" y="149" width="1" height="1" fill="#7c7c7c"/><rect x="13" y="151" width="1" height="1" fill="#7c7c7c"/><rect x="13" y="153" width="1" height="1" fill="#7c7c7c"/><rect x="13" y="155" width="1" height="1" fill="#7c7c7c"/><rect x="13" y="157" width="1" height="1" fill="#7c7c7c"/><rect x="13" y="159" width="1" height="1" fill="#7c7c7c"/><rect x="13" y="161" width="1" height="1" fill="#7c7c7c"/><rect x="13" y="163" width="1" height="1" fill="#7c7c7c"/><rect x="13" y="165" width="1" height="1" fill="#7c7c7c"/><rect x="13" y="167" width="1" height="1" fill="#7c7c7c"/><rect x="13" y="169" width="1" height="1" fill="#7c7c7c"/><rect x="13" y="171" width="1" height="1" fill="#7c7c7c"/><rect x="13" y="173" width="1" height="1" fill="#7c7c7c"/><rect x="13" y="175" width="1" height="1" fill="#7c7c7c"/><rect x="13" y="177" width="1" height="1" fill="#7c7c7c"/><rect x="13" y="179" width="1" height="1" fill="#7c7c7c"/><rect x="13" y="181" width="1" height="1" fill="#7c7c7c"/><rect x="13" y="183" width="1" height="1" fill="#7c7c7c"/><rect x="13" y="185" width="1" height="1" fill="#7c7c7c"/><rect x="13" y="187" width="1" height="1" fill="#7c7c7c"/><rect x="13" y="189" width="1" height="1" fill="#7c7c7c"/><rect x="13" y="191" width="1" height="1" fill="#7c7c7c"/><rect x="13" y="193" width="1" height="1" fill="#7c7c7c"/><rect x="13" y="195" width="1" height="1" fill="#7c7c7c"/><rect x="13" y="197" width="1" height="1" fill="#7c7c7c"/><rect x="13" y="199" width="1" height="1" fill="#7c7c7c"/><rect x="13" y="201" width="1" height="1" fill="#7c7c7c"/><rect x="13" y="203" width="1" height="1" fill="#7c7c7c"/><rect x="13" y="205" width="1" height="1" fill="#7c7c7c"/><rect x="13" y="207" width="1" height="1" fill="#7c7c7c"/><rect x="13" y="209" width="1" height="1" fill="#7c7c7c"/><rect x="32" y="1" width="1" height="1" fill="#7c7c7c"/><rect x="32" y="3" width="1" height="1" fill="#7c7c7c"/><rect x="32" y="5" width="1" height="1" fill="#7c7c7c"/><rect x="32" y="7" width="1" height="1" fill="#7c7c7c"/><rect x="32" y="9" width="1" height="1" fill="#7c7c7c"/><rect x="32" y="97" width="1" height="1" fill="#7c7c7c"/><rect x="32" y="99" width="1" height="1" fill="#7c7c7c"/><rect x="32" y="101" width="1" height="1" fill="#7c7c7c"/><rect x="32" y="103" width="1" height="1" fill="#7c7c7c"/><rect x="32" y="105" width="1" height="1" fill="#7c7c7c"/><rect x="32" y="107" width="1" height="1" fill="#7c7c7c"/><rect x="32" y="109" width="1" height="1" fill="#7c7c7c"/><rect x="32" y="111" width="1" height="1" fill="#7c7c7c"/><rect x="32" y="113" width="1" height="1" fill="#7c7c7c"/><rect x="32" y="115" width="1" height="1" fill="#7c7c7c"/><rect x="32" y="117" width="1" height="1" fill="#7c7c7c"/><rect x="32" y="119" width="1" height="1" fill="#7c7c7c"/><rect x="32" y="121" width="1" height="1" fill="#7c7c7c"/><rect x="32" y="123" width="1" height="1" fill="#7c7c7c"/><rect x="32" y="125" width="1" height="1" fill="#7c7c7c"/><rect x="32" y="127" width="1" height="1" fill="#7c7c7c"/><rect x="32" y="129" width="1" height="1" fill="#7c7c7c"/><rect x="32" y="131" width="1" height="1" fill="#7c7c7c"/><rect x="32" y="133" width="1" height="1" fill="#7c7c7c"/><rect x="32" y="135" width="1" height="1" fill="#7c7c7c"/><rect x="32" y="137" width="1" height="1" fill="#7c7c7c"/><rect x="32" y="139" width="1" height="1" fill="#7c7c7c"/><rect x="32" y="141" width="1" height="1" fill="#7c7c7c"/><rect x="32" y="143" width="1" height="1" fill="#7c7c7c"/><rect x="32" y="145" width="1" height="1" fill="#7c7c7c"/><rect x="32" y="147" width="1" height="1" fill="#7c7c7c"/><rect x="32" y="149" width="1" height="1" fill="#7c7c7c"/><rect x="32" y="151" width="1" height="1" fill="#7c7c7c"/><rect x="32" y="153" width="1" height="1" fill="#7c7c7c"/><rect x="32" y="155" width="1" height="1" fill="#7c7c7c"/><rect x="32" y="157" width="1" height="1" fill="#7c7c7c"/><rect x="32" y="159" width="1" height="1" fill="#7c7c7c"/><rect x="32" y="161" width="1" height="1" fill="#7c7c7c"/><rect x="32" y="163" width="1" height="1" fill="#7c7c7c"/><rect x="32" y="165" width="1" height="1" fill="#7c7c7c"/><rect x="32" y="167" width="1" height="1" fill="#7c7c7c"/><rect x="32" y="169" width="1" height="1" fill="#7c7c7c"/><rect x="32" y="171" width="1" height="1" fill="#7c7c7c"/><rect x="32" y="173" width="1" height="1" fill="#7c7c7c"/><rect x="32" y="175" width="1" height="1" fill="#7c7c7c"/><rect x="32" y="177" width="1" height="1" fill="#7c7c7c"/><rect x="32" y="179" width="1" height="1" fill="#7c7c7c"/><rect x="32" y="181" width="1" height="1" fill="#7c7c7c"/><rect x="32" y="183" width="1" height="1" fill="#7c7c7c"/><rect x="32" y="185" width="1" height="1" fill="#7c7c7c"/><rect x="32" y="187" width="1" height="1" fill="#7c7c7c"/><rect x="32" y="189" width="1" height="1" fill="#7c7c7c"/><rect x="32" y="191" width="1" height="1" fill="#7c7c7c"/><rect x="32" y="193" width="1" height="1" fill="#7c7c7c"/><rect x="32" y="195" width="1" height="1" fill="#7c7c7c"/><rect x="32" y="197" width="1" height="1" fill="#7c7c7c"/><rect x="32" y="199" width="1" height="1" fill="#7c7c7c"/><rect x="32" y="201" width="1" height="1" fill="#7c7c7c"/><rect x="32" y="203" width="1" height="1" fill="#7c7c7c"/><rect x="32" y="205" width="1" height="1" fill="#7c7c7c"/><rect x="32" y="207" width="1" height="1" fill="#7c7c7c"/><rect x="32" y="209" width="1" height="1" fill="#7c7c7c"/><rect x="51" y="17" width="1" height="1" fill="#7c7c7c"/><rect x="51" y="19" width="1" height="1" fill="#7c7c7c"/><rect x="51" y="21" width="1" height="1" fill="#7c7c7c"/><rect x="51" y="23" width="1" height="1" fill="#7c7c7c"/><rect x="51" y="25" width="1" height="1" fill="#7c7c7c"/><rect x="51" y="27" width="1" height="1" fill="#7c7c7c"/><rect x="51" y="29" width="1" height="1" fill="#7c7c7c"/><rect x="51" y="31" width="1" height="1" fill="#7c7c7c"/><rect x="51" y="33" width="1" height="1" fill="#7c7c7c"/><rect x="51" y="35" width="1" height="1" fill="#7c7c7c"/><rect x="51" y="37" width="1" height="1" fill="#7c7c7c"/><rect x="51" y="39" width="1" height="1" fill="#7c7c7c"/><rect x="51" y="41" width="1" height="1" fill="#7c7c7c"/><rect x="51" y="43" width="1" height="1" fill="#7c7c7c"/><rect x="51" y="45" width="1" height="1" fill="#7c7c7c"/><rect x="51" y="47" width="1" height="1" fill="#7c7c7c"/><rect x="51" y="49" width="1" height="1" fill="#7c7c7c"/><rect x="51" y="51" width="1" height="1" fill="#7c7c7c"/><rect x="51" y="53" width="1" height="1" fill="#7c7c7c"/><rect x="51" y="55" width="1" height="1" fill="#7c7c7c"/><rect x="51" y="57" width="1" height="1" fill="#7c7c7c"/><rect x="51" y="59" width="1" height="1" fill="#7c7c7c"/><rect x="51" y="61" width="1" height="1" fill="#7c7c7c"/><rect x="51" y="63" width="1" height="1" fill="#7c7c7c"/><rect x="51" y="65" width="1" height="1" fill="#7c7c7c"/><rect x="51" y="67" width="1" height="1" fill="#7c7c7c"/><rect x="51" y="69" width="1" height="1" fill="#7c7c7c"/><rect x="51" y="71" width="1" height="1" fill="#7c7c7c"/><rect x="51" y="73" width="1" height="1" fill="#7c7c7c"/><rect x="51" y="129" width="1" height="1" fill="#7c7c7c"/><rect x="51" y="131" width="1" height="1" fill="#7c7c7c"/><rect x="51" y="133" width="1" height="1" fill="#7c7c7c"/><rect x="51" y="135" width="1" height="1" fill="#7c7c7c"/><rect x="51" y="137" width="1" height="1" fill="#7c7c7c"/><rect x="51" y="139" width="1" height="1" fill="#7c7c7c"/><rect x="51" y="141" width="1" height="1" fill="#7c7c7c"/><rect x="51" y="143" width="1" height="1" fill="#7c7c7c"/><rect x="51" y="145" width="1" height="1" fill="#7c7c7c"/><rect x="51" y="147" width="1" height="1" fill="#7c7c7c"/><rect x="51" y="149" width="1" height="1" fill="#7c7c7c"/><rect x="51" y="151" width="1" height="1" fill="#7c7c7c"/><rect x="51" y="153" width="1" height="1" fill="#7c7c7c"/><rect x="51" y="155" width="1" height="1" fill="#7c7c7c"/><rect x="51" y="157" width="1" height="1" fill="#7c7c7c"/><rect x="51" y="159" width="1" height="1" fill="#7c7c7c"/><rect x="51" y="161" width="1" height="1" fill="#7c7c7c"/><rect x="51" y="163" width="1" height="1" fill="#7c7c7c"/><rect x="51" y="165" width="1" height="1" fill="#7c7c7c"/><rect x="51" y="167" width="1" height="1" fill="#7c7c7c"/><rect x="51" y="169" width="1" height="1" fill="#7c7c7c"/><rect x="51" y="171" width="1" height="1" fill="#7c7c7c"/><rect x="51" y="173" width="1" height="1" fill="#7c7c7c"/><rect x="51" y="175" width="1" height="1" fill="#7c7c7c"/><rect x="51" y="177" width="1" height="1" fill="#7c7c7c"/><rect x="51" y="179" width="1" height="1" fill="#7c7c7c"/><rect x="51" y="181" width="1" height="1" fill="#7c7c7c"/><rect x="51" y="183" width="1" height="1" fill="#7c7c7c"/><rect x="51" y="185" width="1" height="1" fill="#7c7c7c"/><rect x="51" y="187" width="1" height="1" fill="#7c7c7c"/><rect x="51" y="189" width="1" height="1" fill="#7c7c7c"/><rect x="51" y="191" width="1" height="1" fill="#7c7c7c"/><rect x="51" y="193" width="1" height="1" fill="#7c7c7c"/><rect x="51" y="195" width="1" height="1" fill="#7c7c7c"/><rect x="51" y="197" width="1" height="1" fill="#7c7c7c"/><rect x="51" y="199" width="1" height="1" fill="#7c7c7c"/><rect x="51" y="201" width="1" height="1" fill="#7c7c7c"/><rect x="51" y="203" width="1" height="1" fill="#7c7c7c"/><rect x="51" y="205" width="1" height="1" fill="#7c7c7c"/><rect x="51" y="207" width="1" height="1" fill="#7c7c7c"/><rect x="51" y="209" width="1" height="1" fill="#7c7c7c"/><rect x="70" y="193" width="1" height="1" fill="#7c7c7c"/><rect x="70" y="195" width="1" height="1" fill="#7c7c7c"/><rect x="70" y="197" width="1" height="1" fill="#7c7c7c"/><rect x="70" y="199" width="1" height="1" fill="#7c7c7c"/><rect x="70" y="201" width="1" height="1" fill="#7c7c7c"/><rect x="70" y="203" width="1" height="1" fill="#7c7c7c"/><rect x="70" y="205" width="1" height="1" fill="#7c7c7c"/><rect x="70" y="207" width="1" height="1" fill="#7c7c7c"/><rect x="70" y="209" width="1" height="1" fill="#7c7c7c"/><rect x="38" y="9" width="1" height="1" fill="#7c7c7c"/><rect x="40" y="9" width="1" height="1" fill="#7c7c7c"/><rect x="29" y="6" width="7" height="4" fill="#fdfdfd"/><rect x="29" y="10" width="7" height="3" fill="#e6e6e6"/><rect x="29" y="5" width="7" height="1" fill="#8f8f8f"/><rect x="29" y="13" width="7" height="1" fill="#8f8f8f"/><rect x="28" y="6" width="1" height="7" fill="#8f8f8f"/><rect x="36" y="6" width="1" height="7" fill="#8f8f8f"/><rect x="28" y="5" width="1" height="1" fill="#cdcdcd"/><rect x="36" y="5" width="1" height="1" fill="#cdcdcd"/><rect x="28" y="13" width="1" height="1" fill="#cdcdcd"/><rect x="36" y="13" width="1" height="1" fill="#cdcdcd"/><rect x="30" y="9" width="5" height="1" fill="#2f4d9c"/><rect x="57" y="25" width="1" height="1" fill="#7c7c7c"/><rect x="59" y="25" width="1" height="1" fill="#7c7c7c"/><rect x="48" y="22" width="7" height="4" fill="#fdfdfd"/><rect x="48" y="26" width="7" height="3" fill="#e6e6e6"/><rect x="48" y="21" width="7" height="1" fill="#8f8f8f"/><rect x="48" y="29" width="7" height="1" fill="#8f8f8f"/><rect x="47" y="22" width="1" height="7" fill="#8f8f8f"/><rect x="55" y="22" width="1" height="7" fill="#8f8f8f"/><rect x="47" y="21" width="1" height="1" fill="#cdcdcd"/><rect x="55" y="21" width="1" height="1" fill="#cdcdcd"/><rect x="47" y="29" width="1" height="1" fill="#cdcdcd"/><rect x="55" y="29" width="1" height="1" fill="#cdcdcd"/><rect x="49" y="25" width="5" height="1" fill="#2f4d9c"/><rect x="51" y="23" width="1" height="5" fill="#2f4d9c"/><rect x="57" y="41" width="1" height="1" fill="#7c7c7c"/><rect x="59" y="41" width="1" height="1" fill="#7c7c7c"/><rect x="48" y="38" width="7" height="4" fill="#fdfdfd"/><rect x="48" y="42" width="7" height="3" fill="#e6e6e6"/><rect x="48" y="37" width="7" height="1" fill="#8f8f8f"/><rect x="48" y="45" width="7" height="1" fill="#8f8f8f"/><rect x="47" y="38" width="1" height="7" fill="#8f8f8f"/><rect x="55" y="38" width="1" height="7" fill="#8f8f8f"/><rect x="47" y="37" width="1" height="1" fill="#cdcdcd"/><rect x="55" y="37" width="1" height="1" fill="#cdcdcd"/><rect x="47" y="45" width="1" height="1" fill="#cdcdcd"/><rect x="55" y="45" width="1" height="1" fill="#cdcdcd"/><rect x="49" y="41" width="5" height="1" fill="#2f4d9c"/><rect x="51" y="39" width="1" height="5" fill="#2f4d9c"/><rect x="57" y="57" width="1" height="1" fill="#7c7c7c"/><rect x="59" y="57" width="1" height="1" fill="#7c7c7c"/><rect x="48" y="54" width="7" height="4" fill="#fdfdfd"/><rect x="48" y="58" width="7" height="3" fill="#e6e6e6"/><rect x="48" y="53" width="7" height="1" fill="#8f8f8f"/><rect x="48" y="61" width="7" height="1" fill="#8f8f8f"/><rect x="47" y="54" width="1" height="7" fill="#8f8f8f"/><rect x="55" y="54" width="1" height="7" fill="#8f8f8f"/><rect x="47" y="53" width="1" height="1" fill="#cdcdcd"/><rect x="55" y="53" width="1" height="1" fill="#cdcdcd"/><rect x="47" y="61" width="1" height="1" fill="#cdcdcd"/><rect x="55" y="61" width="1" height="1" fill="#cdcdcd"/><rect x="49" y="57" width="5" height="1" fill="#2f4d9c"/><rect x="51" y="55" width="1" height="5" fill="#2f4d9c"/><rect x="57" y="73" width="1" height="1" fill="#7c7c7c"/><rect x="59" y="73" width="1" height="1" fill="#7c7c7c"/><rect x="48" y="70" width="7" height="4" fill="#fdfdfd"/><rect x="48" y="74" width="7" height="3" fill="#e6e6e6"/><rect x="48" y="69" width="7" height="1" fill="#8f8f8f"/><rect x="48" y="77" width="7" height="1" fill="#8f8f8f"/><rect x="47" y="70" width="1" height="7" fill="#8f8f8f"/><rect x="55" y="70" width="1" height="7" fill="#8f8f8f"/><rect x="47" y="69" width="1" height="1" fill="#cdcdcd"/><rect x="55" y="69" width="1" height="1" fill="#cdcdcd"/><rect x="47" y="77" width="1" height="1" fill="#cdcdcd"/><rect x="55" y="77" width="1" height="1" fill="#cdcdcd"/><rect x="49" y="73" width="5" height="1" fill="#2f4d9c"/><rect x="51" y="71" width="1" height="5" fill="#2f4d9c"/><rect x="19" y="89" width="1" height="1" fill="#7c7c7c"/><rect x="21" y="89" width="1" height="1" fill="#7c7c7c"/><rect x="10" y="86" width="7" height="4" fill="#fdfdfd"/><rect x="10" y="90" width="7" height="3" fill="#e6e6e6"/><rect x="10" y="85" width="7" height="1" fill="#8f8f8f"/><rect x="10" y="93" width="7" height="1" fill="#8f8f8f"/><rect x="9" y="86" width="1" height="7" fill="#8f8f8f"/><rect x="17" y="86" width="1" height="7" fill="#8f8f8f"/><rect x="9" y="85" width="1" height="1" fill="#cdcdcd"/><rect x="17" y="85" width="1" height="1" fill="#cdcdcd"/><rect x="9" y="93" width="1" height="1" fill="#cdcdcd"/><rect x="17" y="93" width="1" height="1" fill="#cdcdcd"/><rect x="11" y="89" width="5" height="1" fill="#2f4d9c"/><rect x="38" y="105" width="1" height="1" fill="#7c7c7c"/><rect x="40" y="105" width="1" height="1" fill="#7c7c7c"/><rect x="29" y="102" width="7" height="4" fill="#fdfdfd"/><rect x="29" y="106" width="7" height="3" fill="#e6e6e6"/><rect x="29" y="101" width="7" height="1" fill="#8f8f8f"/><rect x="29" y="109" width="7" height="1" fill="#8f8f8f"/><rect x="28" y="102" width="1" height="7" fill="#8f8f8f"/><rect x="36" y="102" width="1" height="7" fill="#8f8f8f"/><rect x="28" y="101" width="1" height="1" fill="#cdcdcd"/><rect x="36" y="101" width="1" height="1" fill="#cdcdcd"/><rect x="28" y="109" width="1" height="1" fill="#cdcdcd"/><rect x="36" y="109" width="1" height="1" fill="#cdcdcd"/><rect x="30" y="105" width="5" height="1" fill="#2f4d9c"/><rect x="32" y="103" width="1" height="5" fill="#2f4d9c"/><rect x="38" y="121" width="1" height="1" fill="#7c7c7c"/><rect x="40" y="121" width="1" height="1" fill="#7c7c7c"/><rect x="29" y="118" width="7" height="4" fill="#fdfdfd"/><rect x="29" y="122" width="7" height="3" fill="#e6e6e6"/><rect x="29" y="117" width="7" height="1" fill="#8f8f8f"/><rect x="29" y="125" width="7" height="1" fill="#8f8f8f"/><rect x="28" y="118" width="1" height="7" fill="#8f8f8f"/><rect x="36" y="118" width="1" height="7" fill="#8f8f8f"/><rect x="28" y="117" width="1" height="1" fill="#cdcdcd"/><rect x="36" y="117" width="1" height="1" fill="#cdcdcd"/><rect x="28" y="125" width="1" height="1" fill="#cdcdcd"/><rect x="36" y="125" width="1" height="1" fill="#cdcdcd"/><rect x="30" y="121" width="5" height="1" fill="#2f4d9c"/><rect x="57" y="137" width="1" height="1" fill="#7c7c7c"/><rect x="59" y="137" width="1" height="1" fill="#7c7c7c"/><rect x="48" y="134" width="7" height="4" fill="#fdfdfd"/><rect x="48" y="138" width="7" height="3" fill="#e6e6e6"/><rect x="48" y="133" width="7" height="1" fill="#8f8f8f"/><rect x="48" y="141" width="7" height="1" fill="#8f8f8f"/><rect x="47" y="134" width="1" height="7" fill="#8f8f8f"/><rect x="55" y="134" width="1" height="7" fill="#8f8f8f"/><rect x="47" y="133" width="1" height="1" fill="#cdcdcd"/><rect x="55" y="133" width="1" height="1" fill="#cdcdcd"/><rect x="47" y="141" width="1" height="1" fill="#cdcdcd"/><rect x="55" y="141" width="1" height="1" fill="#cdcdcd"/><rect x="49" y="137" width="5" height="1" fill="#2f4d9c"/><rect x="51" y="135" width="1" height="5" fill="#2f4d9c"/><rect x="57" y="153" width="1" height="1" fill="#7c7c7c"/><rect x="59" y="153" width="1" height="1" fill="#7c7c7c"/><rect x="48" y="150" width="7" height="4" fill="#fdfdfd"/><rect x="48" y="154" width="7" height="3" fill="#e6e6e6"/><rect x="48" y="149" width="7" height="1" fill="#8f8f8f"/><rect x="48" y="157" width="7" height="1" fill="#8f8f8f"/><rect x="47" y="150" width="1" height="7" fill="#8f8f8f"/><rect x="55" y="150" width="1" height="7" fill="#8f8f8f"/><rect x="47" y="149" width="1" height="1" fill="#cdcdcd"/><rect x="55" y="149" width="1" height="1" fill="#cdcdcd"/><rect x="47" y="157" width="1" height="1" fill="#cdcdcd"/><rect x="55" y="157" width="1" height="1" fill="#cdcdcd"/><rect x="49" y="153" width="5" height="1" fill="#2f4d9c"/><rect x="51" y="151" width="1" height="5" fill="#2f4d9c"/><rect x="57" y="169" width="1" height="1" fill="#7c7c7c"/><rect x="59" y="169" width="1" height="1" fill="#7c7c7c"/><rect x="48" y="166" width="7" height="4" fill="#fdfdfd"/><rect x="48" y="170" width="7" height="3" fill="#e6e6e6"/><rect x="48" y="165" width="7" height="1" fill="#8f8f8f"/><rect x="48" y="173" width="7" height="1" fill="#8f8f8f"/><rect x="47" y="166" width="1" height="7" fill="#8f8f8f"/><rect x="55" y="166" width="1" height="7" fill="#8f8f8f"/><rect x="47" y="165" width="1" height="1" fill="#cdcdcd"/><rect x="55" y="165" width="1" height="1" fill="#cdcdcd"/><rect x="47" y="173" width="1" height="1" fill="#cdcdcd"/><rect x="55" y="173" width="1" height="1" fill="#cdcdcd"/><rect x="49" y="169" width="5" height="1" fill="#2f4d9c"/><rect x="51" y="167" width="1" height="5" fill="#2f4d9c"/><rect x="57" y="185" width="1" height="1" fill="#7c7c7c"/><rect x="59" y="185" width="1" height="1" fill="#7c7c7c"/><rect x="48" y="182" width="7" height="4" fill="#fdfdfd"/><rect x="48" y="186" width="7" height="3" fill="#e6e6e6"/><rect x="48" y="181" width="7" height="1" fill="#8f8f8f"/><rect x="48" y="189" width="7" height="1" fill="#8f8f8f"/><rect x="47" y="182" width="1" height="7" fill="#8f8f8f"/><rect x="55" y="182" width="1" height="7" fill="#8f8f8f"/><rect x="47" y="181" width="1" height="1" fill="#cdcdcd"/><rect x="55" y="181" width="1" height="1" fill="#cdcdcd"/><rect x="47" y="189" width="1" height="1" fill="#cdcdcd"/><rect x="55" y="189" width="1" height="1" fill="#cdcdcd"/><rect x="49" y="185" width="5" height="1" fill="#2f4d9c"/><rect x="76" y="201" width="1" height="1" fill="#7c7c7c"/><rect x="78" y="201" width="1" height="1" fill="#7c7c7c"/><rect x="67" y="198" width="7" height="4" fill="#fdfdfd"/><rect x="67" y="202" width="7" height="3" fill="#e6e6e6"/><rect x="67" y="197" width="7" height="1" fill="#8f8f8f"/><rect x="67" y="205" width="7" height="1" fill="#8f8f8f"/><rect x="66" y="198" width="1" height="7" fill="#8f8f8f"/><rect x="74" y="198" width="1" height="7" fill="#8f8f8f"/><rect x="66" y="197" width="1" height="1" fill="#cdcdcd"/><rect x="74" y="197" width="1" height="1" fill="#cdcdcd"/><rect x="66" y="205" width="1" height="1" fill="#cdcdcd"/><rect x="74" y="205" width="1" height="1" fill="#cdcdcd"/><rect x="68" y="201" width="5" height="1" fill="#2f4d9c"/><rect x="70" y="199" width="1" height="5" fill="#2f4d9c"/></svg>
<div class="t" style="left:423px;top:110px;font-size:12px;line-height:16px;font-weight:normal;color:#000;letter-spacing:0px;transform:scaleX(0.872);">MyDevice</div>
<div class="t" style="left:442px;top:126px;font-size:12px;line-height:16px;font-weight:normal;color:#000;letter-spacing:0px;transform:scaleX(0.872);">MyEnumObject</div>
<div class="t" style="left:442px;top:142px;font-size:12px;line-height:16px;font-weight:normal;color:#000;letter-spacing:0px;transform:scaleX(0.872);">MyLevel</div>
<div class="t" style="left:442px;top:158px;font-size:12px;line-height:16px;font-weight:normal;color:#000;letter-spacing:0px;transform:scaleX(0.872);">MyLevelAlarm</div>
<div class="t" style="left:442px;top:174px;font-size:12px;line-height:16px;font-weight:normal;color:#000;letter-spacing:0px;transform:scaleX(0.872);">MySwitch</div>
<div class="t" style="left:404px;top:190px;font-size:12px;line-height:16px;font-weight:normal;color:#000;letter-spacing:0px;transform:scaleX(0.872);">StaticData</div>
<div class="t" style="left:423px;top:206px;font-size:12px;line-height:16px;font-weight:normal;color:#000;letter-spacing:0px;transform:scaleX(0.872);">AccessLevels</div>
<div class="t" style="left:423px;top:222px;font-size:12px;line-height:16px;font-weight:normal;color:#000;letter-spacing:0px;transform:scaleX(0.872);">AnalogItemArrays</div>
<div class="t" style="left:442px;top:238px;font-size:12px;line-height:16px;font-weight:normal;color:#000;letter-spacing:0px;transform:scaleX(0.872);">ByteAnalogItemArray</div>
<div class="t" style="left:442px;top:254px;font-size:12px;line-height:16px;font-weight:normal;color:#000;letter-spacing:0px;transform:scaleX(0.872);">DoubleAnalogItemArray</div>
<div class="t" style="left:442px;top:270px;font-size:12px;line-height:16px;font-weight:normal;color:#000;letter-spacing:0px;transform:scaleX(0.872);">FloatAnalogItemArray</div>
<div class="t" style="left:442px;top:286px;font-size:12px;line-height:16px;font-weight:normal;color:#000;letter-spacing:0px;transform:scaleX(0.872);">Int16AnalogItemArray</div>
<div class="t" style="left:461px;top:302px;font-size:12px;line-height:16px;font-weight:normal;color:#000;letter-spacing:0px;transform:scaleX(0.872);">Definition</div>
<div style="left:720px;top:110px;width:16px;height:209px;background:#f0f0f0"></div>
<div style="left:720px;top:138px;width:15px;height:69px;background:#cdcdcd"></div>
<svg style="left:720px;top:110px" width="16" height="209"><polyline points="4,11.5 7.5,7.5 11,11.5" fill="none" stroke="#505050" stroke-width="2"/><polyline points="4,198.5 7.5,202.5 11,198.5" fill="none" stroke="#505050" stroke-width="2"/></svg>
<div style="left:3px;top:325px;width:367px;height:179px;background:#fff"></div>
<div style="left:3px;top:325px;width:367px;height:1px;background:#a0a0a0"></div>
<div style="left:3px;top:326px;width:367px;height:17px;background:#c8c8c8"></div>
<div style="left:3px;top:343px;width:22px;height:96px;background:#c8c8c8"></div>
<div style="left:25px;top:343px;width:115px;height:15px;background:#0078d7"></div>
<div style="left:25px;top:358px;width:345px;height:1px;background:#c8c8c8"></div>
<div class="t" style="left:29px;top:343px;font-size:12px;line-height:16px;font-weight:normal;color:#fff;letter-spacing:0px;transform:scaleX(0.872);">First Channel</div>
<div class="t" style="left:144px;top:343px;font-size:12px;line-height:16px;font-weight:bold;color:#000;letter-spacing:-0.2px;">102</div>
<div style="left:25px;top:374px;width:345px;height:1px;background:#c8c8c8"></div>
<div class="t" style="left:29px;top:359px;font-size:12px;line-height:16px;font-weight:normal;color:#000;letter-spacing:0px;transform:scaleX(0.872);">Last Channel Number</div>
<div class="t" style="left:144px;top:359px;font-size:12px;line-height:16px;font-weight:bold;color:#000;letter-spacing:-0.2px;">102</div>
<div style="left:25px;top:390px;width:345px;height:1px;background:#c8c8c8"></div>
<div class="t" style="left:29px;top:375px;font-size:12px;line-height:16px;font-weight:normal;color:#000;letter-spacing:0px;transform:scaleX(0.872);">Channel Type</div>
<div class="t" style="left:144px;top:375px;font-size:12px;line-height:16px;font-weight:bold;color:#000;letter-spacing:-0.2px;">real</div>
<div style="left:25px;top:406px;width:345px;height:1px;background:#c8c8c8"></div>
<div class="t" style="left:29px;top:391px;font-size:12px;line-height:16px;font-weight:normal;color:#000;letter-spacing:0px;transform:scaleX(0.872);">Channel Direction</div>
<div class="t" style="left:144px;top:391px;font-size:12px;line-height:16px;font-weight:bold;color:#000;letter-spacing:-0.2px;">input</div>
<div style="left:25px;top:422px;width:345px;height:1px;background:#c8c8c8"></div>
<div class="t" style="left:29px;top:407px;font-size:12px;line-height:16px;font-weight:normal;color:#000;letter-spacing:0px;transform:scaleX(0.872);">Server item id</div>
<div class="t" style="left:144px;top:407px;font-size:12px;line-height:16px;font-weight:bold;color:#000;letter-spacing:-0.2px;">ns=3;s=ByteAnalogItem</div>
<div style="left:25px;top:438px;width:345px;height:1px;background:#c8c8c8"></div>
<div class="t" style="left:29px;top:423px;font-size:12px;line-height:16px;font-weight:normal;color:#000;letter-spacing:0px;transform:scaleX(0.872);">Sampling Interval</div>
<div class="t" style="left:144px;top:423px;font-size:12px;line-height:16px;font-weight:bold;color:#000;letter-spacing:-0.2px;">1000</div>
<div style="left:140px;top:343px;width:1px;height:96px;background:#c8c8c8"></div>
<div class="t" style="left:28px;top:327px;font-size:12px;line-height:16px;font-weight:bold;color:#000;letter-spacing:-0.2px;">Channels</div>
<svg style="left:9px;top:332px" width="10" height="7"><polyline points="0.8,0.8 4.5,4.8 8.2,0.8" fill="none" stroke="#404040" stroke-width="1.6"/></svg>
<div style="left:3px;top:503px;width:367px;height:1px;background:#a0a0a0"></div>
<div style="left:3px;top:507px;width:367px;height:1px;background:#a0a0a0"></div>
<div style="left:3px;top:565px;width:367px;height:1px;background:#a0a0a0"></div>
<div style="left:3px;top:325px;width:1px;height:179px;background:#a0a0a0"></div>
<div style="left:3px;top:507px;width:1px;height:59px;background:#a0a0a0"></div>
<div style="left:4px;top:508px;width:1px;height:57px;background:#f8f8f8"></div>
<div class="t" style="left:9px;top:509px;font-size:12px;line-height:16px;font-weight:bold;color:#000;letter-spacing:-0.28px;">First Channel</div>
<div style="left:378px;top:325px;width:360px;height:45px;background:linear-gradient(#fbfbfb,#f0f0f0)"></div>
<div style="left:378px;top:370px;width:360px;height:1px;background:#a0a0a0"></div>
<div style="left:383px;top:330px;width:2px;height:2px;background:#fff"></div>
<div style="left:382px;top:329px;width:2px;height:2px;background:#a0a0a0"></div>
<div style="left:383px;top:334px;width:2px;height:2px;background:#fff"></div>
<div style="left:382px;top:333px;width:2px;height:2px;background:#a0a0a0"></div>
<div style="left:383px;top:338px;width:2px;height:2px;background:#fff"></div>
<div style="left:382px;top:337px;width:2px;height:2px;background:#a0a0a0"></div>
<div style="left:383px;top:342px;width:2px;height:2px;background:#fff"></div>
<div style="left:382px;top:341px;width:2px;height:2px;background:#a0a0a0"></div>
<div style="left:383px;top:346px;width:2px;height:2px;background:#fff"></div>
<div style="left:382px;top:345px;width:2px;height:2px;background:#a0a0a0"></div>
<div style="left:383px;top:350px;width:2px;height:2px;background:#fff"></div>
<div style="left:382px;top:349px;width:2px;height:2px;background:#a0a0a0"></div>
<div style="left:383px;top:354px;width:2px;height:2px;background:#fff"></div>
<div style="left:382px;top:353px;width:2px;height:2px;background:#a0a0a0"></div>
<div style="left:383px;top:358px;width:2px;height:2px;background:#fff"></div>
<div style="left:382px;top:357px;width:2px;height:2px;background:#a0a0a0"></div>
<div style="left:383px;top:362px;width:2px;height:2px;background:#fff"></div>
<div style="left:382px;top:361px;width:2px;height:2px;background:#a0a0a0"></div>
<div class="t" style="left:424px;top:339px;font-size:12px;line-height:16px;font-weight:normal;color:#000;letter-spacing:-0.15px;">Přidat do PARu</div>
<svg style="left:388px;top:332px" width="32" height="30"><path d="M5.5,9 V24 M5.5,12.5 H8 M5.5,17.5 H8 M5.5,22.5 H8" stroke="#8aa8d0" stroke-width="1" stroke-dasharray="1,1" fill="none"/><rect x="4" y="5" width="6" height="3.5" rx="1" fill="#1ea4f0"/><rect x="8" y="10.5" width="6.5" height="3.2" rx="1.2" fill="#ffbe1a"/><rect x="8" y="15.5" width="6.5" height="3.2" rx="1.2" fill="#ffbe1a"/><rect x="8" y="20.5" width="6.5" height="3.2" rx="1.2" fill="#ffbe1a"/><rect x="15.5" y="4.5" width="12.5" height="21" rx="1" fill="#fff" stroke="#5c5c5c" stroke-width="1.3"/><rect x="17" y="6" width="9" height="1.5" fill="#d0d0d0"/><path d="M21,8.5 H27 M21,11 H27 M21,13.5 H27 M21,16 H27 M21,18.5 H27 M21,21 H27 M21,23.5 H27" stroke="#8c8c8c" stroke-width="0.9"/><path d="M19,11.5 H21.5 Q23,11.5 23,13 V19.5" stroke="#e81828" stroke-width="2" fill="none"/><path d="M15.5,11.5 L19.5,8.5 V14.5 Z" fill="#e81828"/></svg>
<div style="left:378px;top:371px;width:360px;height:195px;background:#fff"></div>
<div style="left:378px;top:371px;width:360px;height:17px;background:#f4f7fc"></div>
<div style="left:378px;top:388px;width:22px;height:112px;background:#f4f7fc"></div>
<div style="left:400px;top:388px;width:152px;height:15px;background:#f4f7fc"></div>
<div style="left:400px;top:403px;width:337px;height:1px;background:#f4f7fc"></div>
<div class="t" style="left:404px;top:388px;font-size:12px;line-height:16px;font-weight:normal;color:#000;letter-spacing:0px;transform:scaleX(0.872);">NodeClass</div>
<div class="t" style="left:555.5px;top:388px;font-size:12px;line-height:16px;font-weight:normal;color:#000;letter-spacing:0px;transform:scaleX(0.872);">Variable</div>
<div style="left:400px;top:419px;width:337px;height:1px;background:#f4f7fc"></div>
<div class="t" style="left:404px;top:404px;font-size:12px;line-height:16px;font-weight:normal;color:#000;letter-spacing:0px;transform:scaleX(0.872);">NodeId</div>
<div class="t" style="left:555.5px;top:404px;font-size:12px;line-height:16px;font-weight:normal;color:#000;letter-spacing:0px;transform:scaleX(0.872);">ns=3;s=Int16AnalogItemArray</div>
<div style="left:400px;top:435px;width:337px;height:1px;background:#f4f7fc"></div>
<div class="t" style="left:404px;top:420px;font-size:12px;line-height:16px;font-weight:normal;color:#000;letter-spacing:0px;transform:scaleX(0.872);">Description</div>
<div class="t" style="left:555.5px;top:420px;font-size:12px;line-height:16px;font-weight:normal;color:#000;letter-spacing:0px;transform:scaleX(0.872);"></div>
<div style="left:400px;top:451px;width:337px;height:1px;background:#f4f7fc"></div>
<div class="t" style="left:404px;top:436px;font-size:12px;line-height:16px;font-weight:normal;color:#000;letter-spacing:0px;transform:scaleX(0.872);">DataType</div>
<div class="t" style="left:555.5px;top:436px;font-size:12px;line-height:16px;font-weight:normal;color:#000;letter-spacing:0px;transform:scaleX(0.872);">Int16</div>
<div style="left:400px;top:467px;width:337px;height:1px;background:#f4f7fc"></div>
<div class="t" style="left:404px;top:452px;font-size:12px;line-height:16px;font-weight:normal;color:#000;letter-spacing:0px;transform:scaleX(0.872);">ValueRank</div>
<div class="t" style="left:555.5px;top:452px;font-size:12px;line-height:16px;font-weight:normal;color:#000;letter-spacing:0px;transform:scaleX(0.872);">One Dimension</div>
<div style="left:400px;top:483px;width:337px;height:1px;background:#f4f7fc"></div>
<div class="t" style="left:404px;top:468px;font-size:12px;line-height:16px;font-weight:normal;color:#000;letter-spacing:0px;transform:scaleX(0.872);">AccessLevel</div>
<div class="t" style="left:555.5px;top:468px;font-size:12px;line-height:16px;font-weight:normal;color:#000;letter-spacing:0px;transform:scaleX(0.872);">Current Read, Current Write</div>
<div style="left:400px;top:499px;width:337px;height:1px;background:#f4f7fc"></div>
<div class="t" style="left:404px;top:484px;font-size:12px;line-height:16px;font-weight:normal;color:#000;letter-spacing:0px;transform:scaleX(0.872);">UserAccessLevel</div>
<div class="t" style="left:555.5px;top:484px;font-size:12px;line-height:16px;font-weight:normal;color:#000;letter-spacing:0px;transform:scaleX(0.872);">Current Read, Current Write</div>
<div style="left:552px;top:388px;width:1px;height:112px;background:#f4f7fc"></div>
<div class="t" style="left:403px;top:372px;font-size:12px;line-height:16px;font-weight:bold;color:#000;letter-spacing:-0.2px;">Node</div>
<svg style="left:384px;top:377px" width="10" height="7"><polyline points="0.8,0.8 4.5,4.8 8.2,0.8" fill="none" stroke="#404040" stroke-width="1.6"/></svg>
<div style="left:737px;top:370px;width:1px;height:196px;background:#a0a0a0"></div>
<div style="left:378px;top:565px;width:360px;height:1px;background:#a0a0a0"></div>
<div style="left:378px;top:370px;width:1px;height:196px;background:#a0a0a0"></div>
</body></html>
